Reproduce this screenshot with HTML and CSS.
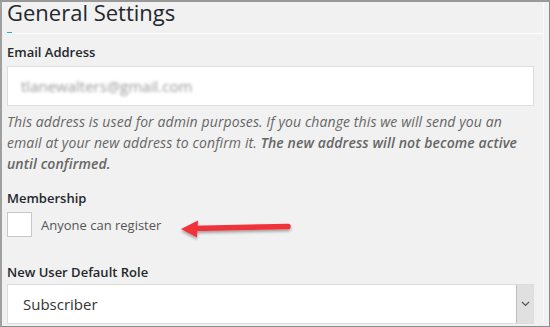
FILE: index.html
```html
<!DOCTYPE html>
<html lang="en">
<head>
  <meta charset="UTF-8" />
  <title>General Settings</title>
  <link rel="stylesheet" href="styles.css">
</head>
<body>
  <div class="frame">
    <div class="panel">
      <h1 class="page-title">General Settings</h1>
      <div class="title-rule"></div>

      <div class="field">
        <label class="field-label" for="admin-email">Email Address</label>
        <div class="text-input"><span class="blurred">tlanewalters@gmail.com</span></div>
        <p class="description">This address is used for admin purposes. If you change this we will send you an email at your new address to confirm it. <strong>The new address will not become active until confirmed.</strong></p>
      </div>

      <div class="field membership">
        <div class="field-label">Membership</div>
        <label class="check-row">
          <span class="checkbox"></span>
          <span class="check-text">Anyone can register</span>
        </label>
        <!-- annotation arrow -->
        <svg class="callout-arrow" width="120" height="26" viewBox="0 0 120 26">
          <defs>
            <filter id="shadow" x="-10%" y="-50%" width="120%" height="200%">
              <feDropShadow dx="0" dy="2" stdDeviation="1.5" flood-color="#000" flood-opacity="0.35"/>
            </filter>
          </defs>
          <g filter="url(#shadow)">
            <line x1="14" y1="11.5" x2="110" y2="9.5" stroke="#f0333a" stroke-width="5.5" stroke-linecap="round"/>
            <polygon points="3,12 20,3.5 19,20.5" fill="#f0333a"/>
          </g>
        </svg>
      </div>

      <div class="field role">
        <div class="field-label">New User Default Role</div>
        <div class="select-box">
          <span class="select-value">Subscriber</span>
          <span class="select-btn">
            <svg width="9" height="6" viewBox="0 0 9 6"><polyline points="1,1 4.5,4.5 8,1" fill="none" stroke="#555" stroke-width="1.2"/></svg>
          </span>
        </div>
      </div>
    </div>
  </div>
</body>
</html>
```

FILE: styles.css
```css
body {
  margin: 0;
  background: #fff;
  font-family: 'Open Sans', 'Noto Sans', sans-serif;
  color: #23282d;
}

.frame {
  width: 550px;
  height: 327px;
  box-sizing: border-box;
  border: 1px solid #8c8c8c;
  border-left: 2px solid #a0a0a0;
  border-top: 2px solid #999;
  background: #f1f1f1;
  overflow: hidden;
}

.panel {
  position: relative;
  width: 542px;
  height: 100%;
  padding-left: 5px;
  box-sizing: border-box;
  border-right: 1px solid #fafafa;
}

.page-title {
  margin: -5px 0 0;
  font-size: 22px;
  font-weight: 400;
  line-height: 30px;
  color: #23282d;
}

.title-rule {
  position: relative;
  height: 0;
  margin-top: 6px;
  border-bottom: 1px solid #fff;
  width: 536px;
}

.title-rule::before {
  content: "";
  position: absolute;
  left: 0;
  top: -1px;
  width: 5px;
  height: 1px;
  background: #27a3d4;
}

.field {
  margin-top: 8px;
}

.field-label {
  display: block;
  font-size: 13px;
  font-weight: 600;
  line-height: 20px;
  color: #23282d;
}

.text-input {
  margin-top: 4px;
  width: 527px;
  height: 40px;
  box-sizing: border-box;
  background: #fff;
  border: 1px solid #ddd;
  display: flex;
  align-items: center;
  padding-left: 13px;
}

.blurred {
  font-size: 15px;
  color: #9a9a9a;
  filter: blur(1.4px);
}

.description {
  max-width: 516px;
  margin: 5px 0 0;
  font-size: 14px;
  font-style: italic;
  letter-spacing: 0.1px;
  line-height: 21px;
  color: #666;
}

.description strong {
  font-weight: 600;
}

.membership {
  position: relative;
  margin-top: 14px;
}

.check-row {
  display: flex;
  align-items: center;
  margin-top: 4px;
}

.checkbox {
  width: 25px;
  height: 25px;
  box-sizing: border-box;
  background: #fff;
  border: 1px solid #c8c8c8;
}

.check-text {
  margin-left: 9px;
  font-size: 13px;
  color: #555;
}

.callout-arrow {
  position: absolute;
  left: 171px;
  top: 29px;
}

.role {
  margin-top: 25px;
}

.select-box {
  margin-top: 2px;
  width: 527px;
  height: 40px;
  box-sizing: border-box;
  background: #fff;
  border: 1px solid #ddd;
  display: flex;
  align-items: center;
}

.select-value {
  flex: 1;
  padding-left: 15px;
  font-size: 15px;
  color: #333;
}

.select-btn {
  width: 16px;
  height: 38px;
  background: #e0e0e0;
  border-left: 1px solid #bdbdbd;
  display: flex;
  align-items: center;
  justify-content: center;
}
```
